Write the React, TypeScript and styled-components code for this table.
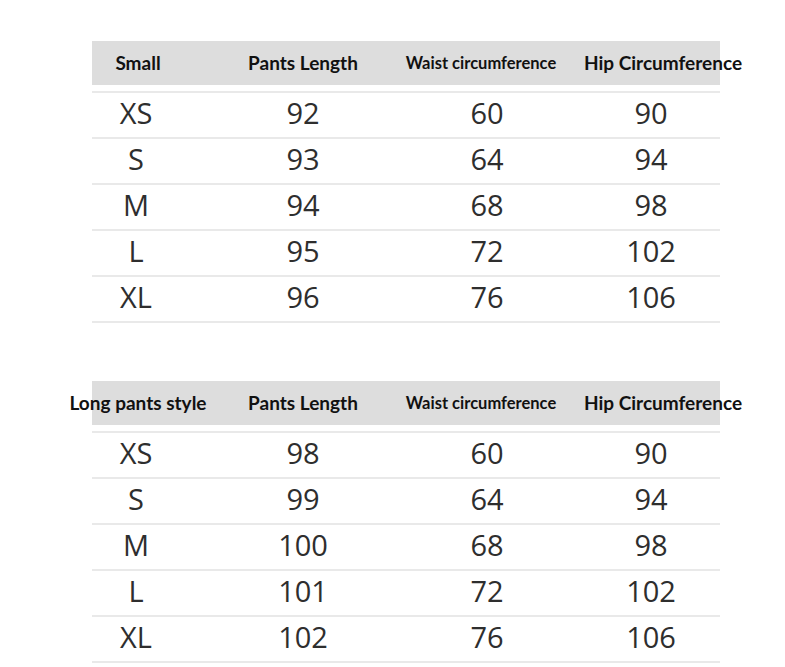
import styled, { createGlobalStyle } from 'styled-components';

type SizeRow = { size: string; length: number; waist: number; hip: number };

const shortRows: SizeRow[] = [
  { size: 'XS', length: 92, waist: 60, hip: 90 },
  { size: 'S', length: 93, waist: 64, hip: 94 },
  { size: 'M', length: 94, waist: 68, hip: 98 },
  { size: 'L', length: 95, waist: 72, hip: 102 },
  { size: 'XL', length: 96, waist: 76, hip: 106 },
];

const longRows: SizeRow[] = [
  { size: 'XS', length: 98, waist: 60, hip: 90 },
  { size: 'S', length: 99, waist: 64, hip: 94 },
  { size: 'M', length: 100, waist: 68, hip: 98 },
  { size: 'L', length: 101, waist: 72, hip: 102 },
  { size: 'XL', length: 102, waist: 76, hip: 106 },
];

const SizeTable = ({ title, rows }: { title: string; rows: SizeRow[] }) => (
  <Table>
    <HeaderRow>
      <HeadCell $shift={2}>{title}</HeadCell>
      <HeadCell>Pants Length</HeadCell>
      <HeadCell $small $shift={-6}>Waist circumference</HeadCell>
      <HeadCell $shift={12}>Hip Circumference</HeadCell>
    </HeaderRow>
    <Spacer />
    {rows.map((row) => (
      <DataRow key={row.size}>
        <Cell>{row.size}</Cell>
        <Cell>{row.length}</Cell>
        <Cell>{row.waist}</Cell>
        <Cell>{row.hip}</Cell>
      </DataRow>
    ))}
  </Table>
);

const App = () => (
  <>
    <GlobalStyle />
    <Page>
      <SizeTable title="Small" rows={shortRows} />
      <SizeTable title="Long pants style" rows={longRows} />
    </Page>
  </>
);

const GlobalStyle = createGlobalStyle`
  body {
    margin: 0;
    background: #fff;
  }
`;

const Page = styled.div`
  display: flex;
  flex-direction: column;
  gap: 58px;
  padding: 41px 0 0 92px;
`;

const Table = styled.div`
  width: 628px;
  display: flex;
  flex-direction: column;
`;

// last track runs past the table edge, like the header text in the picture
const columns = '88px 246px 122px 206px';

const HeaderRow = styled.div`
  display: grid;
  grid-template-columns: ${columns};
  height: 44px;
  background: #dddddd;
`;

const HeadCell = styled.div<{ $small?: boolean; $shift?: number }>`
  display: flex;
  align-items: center;
  justify-content: center;
  white-space: nowrap;
  padding-bottom: 1px;
  transform: translateX(${(p) => p.$shift ?? 0}px);
  font-family: Lato, 'Liberation Sans', sans-serif;
  font-weight: 700;
  font-size: ${(p) => (p.$small ? '16.5px' : '19px')};
  color: #111;
`;

const Spacer = styled.div`
  height: 6px;
  border-bottom: 2px solid #e9e9e9;
`;

const DataRow = styled.div`
  display: grid;
  grid-template-columns: ${columns};
  height: 44px;
  border-bottom: 2px solid #e9e9e9;
`;

const Cell = styled.div`
  display: flex;
  align-items: center;
  justify-content: center;
  padding-bottom: 7px;
  font-family: 'Open Sans', 'Liberation Sans', sans-serif;
  font-size: 29px;
  color: #2e2e2e;
`;

export default App;
